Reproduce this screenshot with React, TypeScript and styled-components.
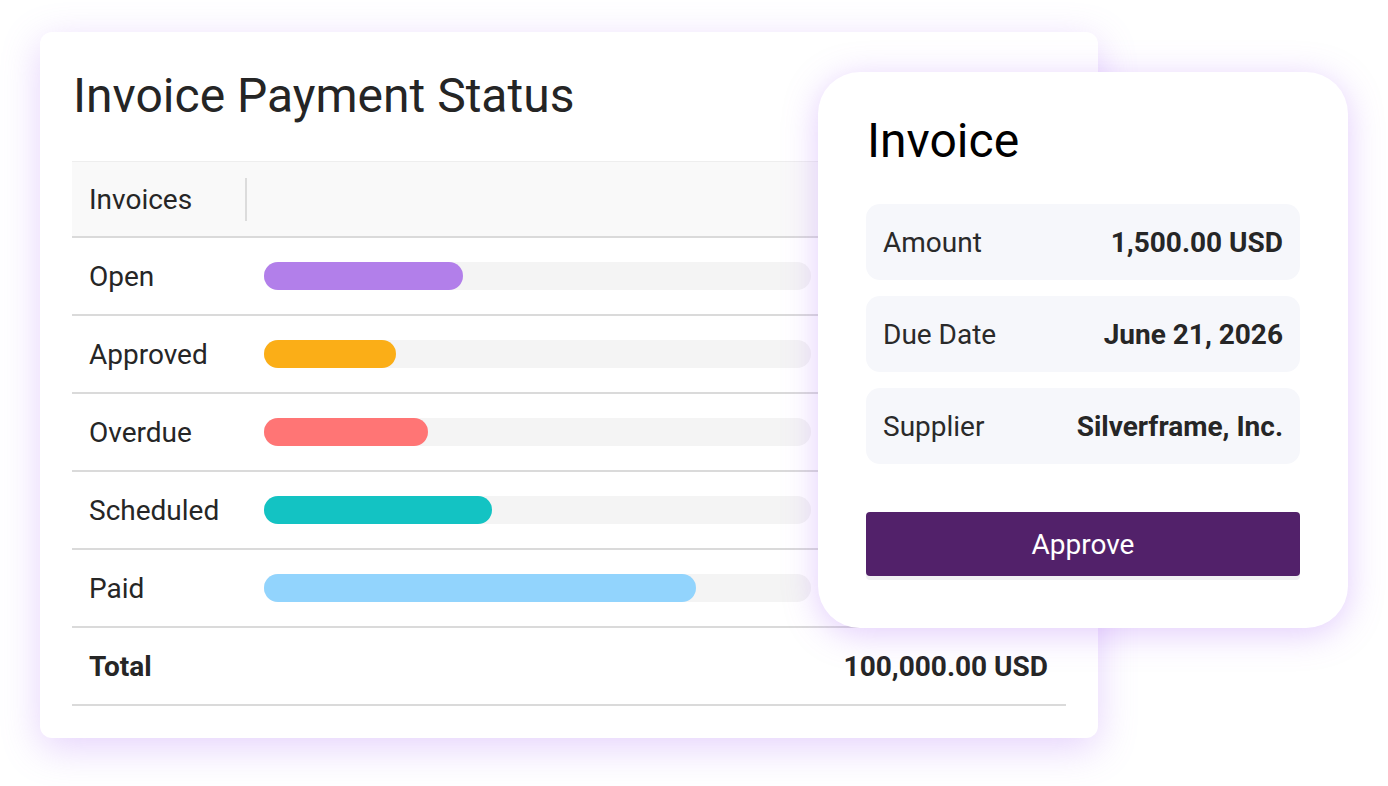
import React from 'react';
import styled, { createGlobalStyle } from 'styled-components';

const GlobalStyle = createGlobalStyle`
  html, body {
    margin: 0;
    padding: 0;
    background: #ffffff;
  }
  body {
    font-family: Roboto, "Liberation Sans", Arial, sans-serif;
    color: #262626;
  }
`;

// #region Styled
const StyledStage = styled.div`
  position: relative;
  width: 1388px;
  height: 786px;
  overflow: hidden;
`;

const StyledStatusCard = styled.section`
  box-sizing: border-box;
  margin: 32px 0 0 40px;
  width: 1058px;
  height: 706px;
  padding: 36px 32px 0;
  background: #fff;
  border-radius: 12px;
  box-shadow: 0 10px 38px rgba(170, 105, 245, 0.3);
`;

const StyledTitle = styled.h1`
  margin: 0 0 37px 1px;
  font-size: 48px;
  line-height: 56px;
  font-weight: 400;
  color: #252525;
`;

const StyledTable = styled.div`
  display: flex;
  flex-direction: column;
`;

const StyledRow = styled.div<{ $header?: boolean }>`
  display: grid;
  grid-template-columns: 175px 1fr;
  align-items: center;
  height: ${(p) => (p.$header ? '74px' : '76px')};
  border-top: ${(p) => (p.$header ? '1px solid #eeeeee' : 'none')};
  border-bottom: 2px solid #dadada;
  background: ${(p) => (p.$header ? '#f9f9f9' : 'transparent')};
  font-size: 28px;
`;

const StyledLabel = styled.div<{ $bold?: boolean; $divider?: boolean }>`
  padding-left: 17px;
  font-weight: ${(p) => (p.$bold ? 700 : 400)};
  color: #262626;
  line-height: 43px;
  border-right: ${(p) => (p.$divider ? '2px solid #dcdcdc' : 'none')};
`;

const StyledBarCell = styled.div`
  padding-left: 17px;
`;

const StyledTrack = styled.div`
  width: 547px;
  height: 28px;
  border-radius: 14px;
  background: #f4f4f4;
`;

const StyledFill = styled.div<{ $color: string }>`
  height: 100%;
  border-radius: 14px;
  background: ${(p) => p.$color};
`;

const StyledTotalValue = styled.div`
  text-align: right;
  padding-right: 18px;
  font-weight: 700;
  color: #262626;
`;

const StyledInvoiceCard = styled.aside`
  position: absolute;
  left: 818px;
  top: 72px;
  box-sizing: border-box;
  width: 530px;
  height: 556px;
  padding: 41px 48px 0;
  background: #fff;
  border-radius: 42px;
  box-shadow: 0 6px 34px rgba(170, 105, 245, 0.34);
  display: flex;
  flex-direction: column;
`;

const StyledInvoiceTitle = styled.h2`
  margin: 0 0 35px 1px;
  font-size: 48px;
  line-height: 56px;
  font-weight: 400;
  color: #000;
`;

const StyledDetailList = styled.div`
  display: flex;
  flex-direction: column;
  gap: 16px;
`;

const StyledDetail = styled.div`
  display: flex;
  justify-content: space-between;
  align-items: center;
  height: 76px;
  padding: 0 17px;
  border-radius: 14px;
  background: #f6f7fb;
  font-size: 28px;
`;

const StyledDetailLabel = styled.span`
  color: #2a2a2a;
`;

const StyledDetailValue = styled.span`
  font-weight: 700;
  color: #262626;
`;

const StyledApproveButton = styled.button`
  margin-top: 48px;
  height: 64px;
  border: none;
  border-radius: 4px;
  background: #52216a;
  color: #fff;
  font-family: inherit;
  font-size: 28px;
  cursor: pointer;
  box-shadow: 0 4px 0 #f1f1f3;
`;
// #endregion

type StatusType = {
  label: string;
  color: string;
  width: number;
};

const statuses: StatusType[] = [
  { label: 'Open', color: '#b27fea', width: 199 },
  { label: 'Approved', color: '#fbae17', width: 132 },
  { label: 'Overdue', color: '#ff7575', width: 164 },
  { label: 'Scheduled', color: '#13c3c3', width: 228 },
  { label: 'Paid', color: '#92d4fd', width: 432 },
];

const details = [
  { label: 'Amount', value: '1,500.00 USD' },
  { label: 'Due Date', value: 'June 21, 2026' },
  { label: 'Supplier', value: 'Silverframe, Inc.' },
];

const App = () => {
  return (
    <>
      <GlobalStyle />
      <StyledStage>
        <StyledStatusCard>
          <StyledTitle>Invoice Payment Status</StyledTitle>
          <StyledTable>
            <StyledRow $header>
              <StyledLabel $divider>Invoices</StyledLabel>
              <div />
            </StyledRow>
            {statuses.map((s) => (
              <StyledRow key={s.label}>
                <StyledLabel>{s.label}</StyledLabel>
                <StyledBarCell>
                  <StyledTrack>
                    <StyledFill $color={s.color} style={{ width: s.width }} />
                  </StyledTrack>
                </StyledBarCell>
              </StyledRow>
            ))}
            <StyledRow>
              <StyledLabel $bold>Total</StyledLabel>
              <StyledTotalValue>100,000.00 USD</StyledTotalValue>
            </StyledRow>
          </StyledTable>
        </StyledStatusCard>

        <StyledInvoiceCard>
          <StyledInvoiceTitle>Invoice</StyledInvoiceTitle>
          <StyledDetailList>
            {details.map((d) => (
              <StyledDetail key={d.label}>
                <StyledDetailLabel>{d.label}</StyledDetailLabel>
                <StyledDetailValue>{d.value}</StyledDetailValue>
              </StyledDetail>
            ))}
          </StyledDetailList>
          <StyledApproveButton>Approve</StyledApproveButton>
        </StyledInvoiceCard>
      </StyledStage>
    </>
  );
};

export default App;
